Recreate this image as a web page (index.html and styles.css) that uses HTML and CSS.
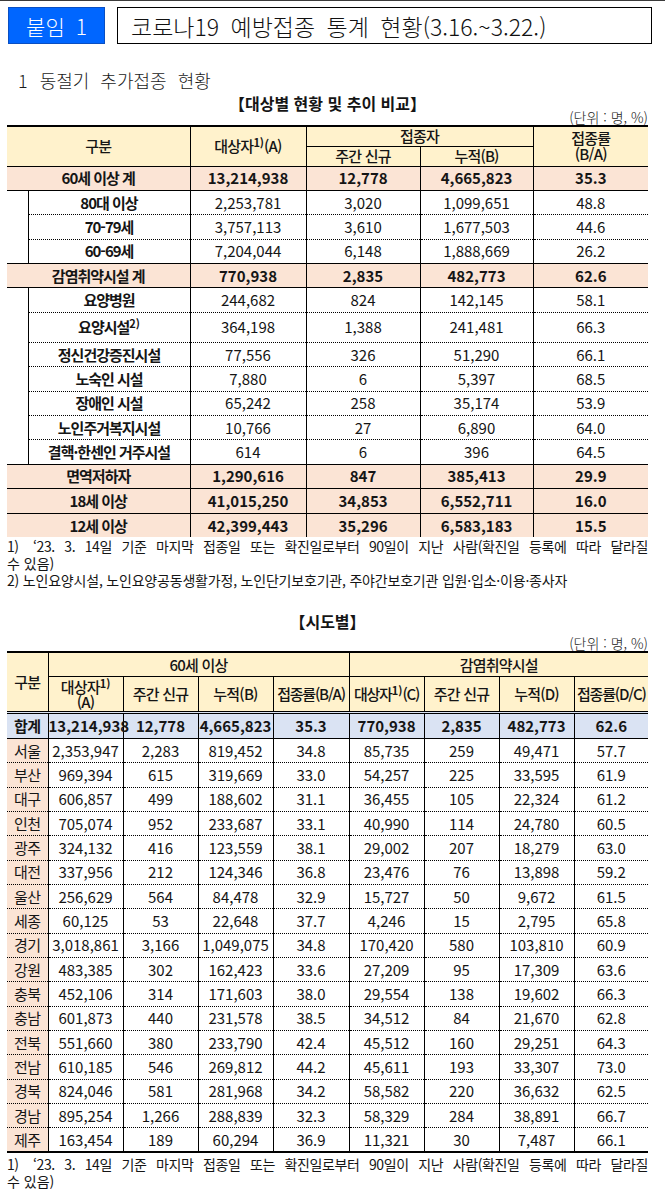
FILE: index.html
```html
<!DOCTYPE html>
<html lang="ko">
<head>
<meta charset="utf-8">
<title>코로나19 예방접종 통계 현황</title>
<link rel="stylesheet" href="styles.css">
</head>
<body>
<div class="page">
  <div class="topbar">
    <div class="tag">붙임 1</div>
    <div class="title">코로나19 예방접종 통계 현황(3.16.~3.22.)</div>
  </div>

  <div class="section"><span class="sec-num">1</span>동절기 추가접종 현황</div>

  <div class="caption">【대상별 현황 및 추이 비교】</div>
  <div class="unit">(단위 : 명, %)</div>

  <table class="t1">
    <colgroup>
      <col class="c-blank"><col class="c-label"><col class="c-num"><col class="c-num2"><col class="c-num3"><col class="c-rate">
    </colgroup>
    <thead>
      <tr class="h1">
        <th colspan="2" rowspan="2">구분</th>
        <th rowspan="2">대상자<sup>1)</sup>(A)</th>
        <th colspan="2">접종자</th>
        <th rowspan="2" class="two">접종률<br>(B/A)</th>
      </tr>
      <tr class="h2">
        <th>주간 신규</th>
        <th>누적(B)</th>
      </tr>
    </thead>
    <tbody>
      <tr class="tot"><td colspan="2" class="lbl">60세 이상 계</td><td>13,214,938</td><td>12,778</td><td>4,665,823</td><td>35.3</td></tr>
      <tr class="sub"><td rowspan="3" class="blank"></td><td class="lbl">80대 이상</td><td>2,253,781</td><td>3,020</td><td>1,099,651</td><td>48.8</td></tr>
      <tr class="sub"><td class="lbl">70-79세</td><td>3,757,113</td><td>3,610</td><td>1,677,503</td><td>44.6</td></tr>
      <tr class="sub"><td class="lbl">60-69세</td><td>7,204,044</td><td>6,148</td><td>1,888,669</td><td>26.2</td></tr>
      <tr class="tot"><td colspan="2" class="lbl">감염취약시설 계</td><td>770,938</td><td>2,835</td><td>482,773</td><td>62.6</td></tr>
      <tr class="sub"><td rowspan="7" class="blank"></td><td class="lbl">요양병원</td><td>244,682</td><td>824</td><td>142,145</td><td>58.1</td></tr>
      <tr class="sub tall"><td class="lbl">요양시설<sup>2)</sup></td><td>364,198</td><td>1,388</td><td>241,481</td><td>66.3</td></tr>
      <tr class="sub"><td class="lbl">정신건강증진시설</td><td>77,556</td><td>326</td><td>51,290</td><td>66.1</td></tr>
      <tr class="sub"><td class="lbl">노숙인 시설</td><td>7,880</td><td>6</td><td>5,397</td><td>68.5</td></tr>
      <tr class="sub"><td class="lbl">장애인 시설</td><td>65,242</td><td>258</td><td>35,174</td><td>53.9</td></tr>
      <tr class="sub"><td class="lbl">노인주거복지시설</td><td>10,766</td><td>27</td><td>6,890</td><td>64.0</td></tr>
      <tr class="sub"><td class="lbl">결핵·한센인 거주시설</td><td>614</td><td>6</td><td>396</td><td>64.5</td></tr>
      <tr class="tot"><td colspan="2" class="lbl">면역저하자</td><td>1,290,616</td><td>847</td><td>385,413</td><td>29.9</td></tr>
      <tr class="tot"><td colspan="2" class="lbl">18세 이상</td><td>41,015,250</td><td>34,853</td><td>6,552,711</td><td>16.0</td></tr>
      <tr class="tot"><td colspan="2" class="lbl">12세 이상</td><td>42,399,443</td><td>35,296</td><td>6,583,183</td><td>15.5</td></tr>
    </tbody>
  </table>

  <div class="notes n1">
    <div class="just"><span class="fn-num">1)</span>‘23. 3. 14일 기준 마지막 접종일 또는 확진일로부터 90일이 지난 사람(확진일 등록에 따라 달라질</div>
    <div>수 있음)</div>
    <div class="narrow">2) 노인요양시설, 노인요양공동생활가정, 노인단기보호기관, 주야간보호기관 입원·입소·이용·종사자</div>
  </div>

  <div class="caption c2">【시도별】</div>
  <div class="unit">(단위 : 명, %)</div>

  <table class="t2">
    <colgroup>
      <col class="d-reg"><col class="d-a"><col class="d-b"><col class="d-c"><col class="d-d"><col class="d-e"><col class="d-f"><col class="d-g"><col class="d-h">
    </colgroup>
    <thead>
      <tr class="g1">
        <th rowspan="2" class="reg-h">구분</th>
        <th colspan="4">60세 이상</th>
        <th colspan="4">감염취약시설</th>
      </tr>
      <tr class="g2">
        <th class="two tight">대상자<sup>1)</sup><br>(A)</th>
        <th>주간 신규</th>
        <th>누적(B)</th>
        <th class="sq">접종률(B/A)</th>
        <th class="sq">대상자<sup>1)</sup>(C)</th>
        <th>주간 신규</th>
        <th>누적(D)</th>
        <th class="sq">접종률(D/C)</th>
      </tr>
    </thead>
    <tbody>
      <tr class="sum"><td class="reg">합계</td><td>13,214,938</td><td>12,778</td><td>4,665,823</td><td>35.3</td><td>770,938</td><td>2,835</td><td>482,773</td><td>62.6</td></tr>
      <tr><td class="reg">서울</td><td>2,353,947</td><td>2,283</td><td>819,452</td><td>34.8</td><td>85,735</td><td>259</td><td>49,471</td><td>57.7</td></tr>
      <tr><td class="reg">부산</td><td>969,394</td><td>615</td><td>319,669</td><td>33.0</td><td>54,257</td><td>225</td><td>33,595</td><td>61.9</td></tr>
      <tr><td class="reg">대구</td><td>606,857</td><td>499</td><td>188,602</td><td>31.1</td><td>36,455</td><td>105</td><td>22,324</td><td>61.2</td></tr>
      <tr><td class="reg">인천</td><td>705,074</td><td>952</td><td>233,687</td><td>33.1</td><td>40,990</td><td>114</td><td>24,780</td><td>60.5</td></tr>
      <tr><td class="reg">광주</td><td>324,132</td><td>416</td><td>123,559</td><td>38.1</td><td>29,002</td><td>207</td><td>18,279</td><td>63.0</td></tr>
      <tr><td class="reg">대전</td><td>337,956</td><td>212</td><td>124,346</td><td>36.8</td><td>23,476</td><td>76</td><td>13,898</td><td>59.2</td></tr>
      <tr><td class="reg">울산</td><td>256,629</td><td>564</td><td>84,478</td><td>32.9</td><td>15,727</td><td>50</td><td>9,672</td><td>61.5</td></tr>
      <tr><td class="reg">세종</td><td>60,125</td><td>53</td><td>22,648</td><td>37.7</td><td>4,246</td><td>15</td><td>2,795</td><td>65.8</td></tr>
      <tr><td class="reg">경기</td><td>3,018,861</td><td>3,166</td><td>1,049,075</td><td>34.8</td><td>170,420</td><td>580</td><td>103,810</td><td>60.9</td></tr>
      <tr><td class="reg">강원</td><td>483,385</td><td>302</td><td>162,423</td><td>33.6</td><td>27,209</td><td>95</td><td>17,309</td><td>63.6</td></tr>
      <tr><td class="reg">충북</td><td>452,106</td><td>314</td><td>171,603</td><td>38.0</td><td>29,554</td><td>138</td><td>19,602</td><td>66.3</td></tr>
      <tr><td class="reg">충남</td><td>601,873</td><td>440</td><td>231,578</td><td>38.5</td><td>34,512</td><td>84</td><td>21,670</td><td>62.8</td></tr>
      <tr><td class="reg">전북</td><td>551,660</td><td>380</td><td>233,790</td><td>42.4</td><td>45,512</td><td>160</td><td>29,251</td><td>64.3</td></tr>
      <tr><td class="reg">전남</td><td>610,185</td><td>546</td><td>269,812</td><td>44.2</td><td>45,611</td><td>193</td><td>33,307</td><td>73.0</td></tr>
      <tr><td class="reg">경북</td><td>824,046</td><td>581</td><td>281,968</td><td>34.2</td><td>58,582</td><td>220</td><td>36,632</td><td>62.5</td></tr>
      <tr><td class="reg">경남</td><td>895,254</td><td>1,266</td><td>288,839</td><td>32.3</td><td>58,329</td><td>284</td><td>38,891</td><td>66.7</td></tr>
      <tr><td class="reg">제주</td><td>163,454</td><td>189</td><td>60,294</td><td>36.9</td><td>11,321</td><td>30</td><td>7,487</td><td>66.1</td></tr>
    </tbody>
  </table>

  <div class="notes n2">
    <div class="just"><span class="fn-num">1)</span>‘23. 3. 14일 기준 마지막 접종일 또는 확진일로부터 90일이 지난 사람(확진일 등록에 따라 달라질</div>
    <div>수 있음)</div>
  </div>
</div>
</body>
</html>
```

FILE: styles.css
```css
html, body {
  margin: 0;
  padding: 0;
  background: #fff;
}

body {
  font-family: "Noto Sans CJK KR", "Noto Sans", sans-serif;
  color: #151515;
}

.page {
  width: 665px;
  border-top: 1px solid #3a3a3a;
}

/* ---------- top bar ---------- */
.topbar {
  display: flex;
  gap: 12px;
  margin-top: 6px;
  padding-left: 8px;
  height: 37px;
}

.tag {
  width: 97px;
  box-sizing: border-box;
  background: #0066ff;
  border: 1px solid #0a4fc2;
  color: #fff;
  font-size: 21px;
  font-weight: 300;
  word-spacing: 5px;
  display: flex;
  align-items: center;
  justify-content: center;
}

.title {
  width: 535px;
  box-sizing: border-box;
  border: 1px solid #000;
  padding-left: 13px;
  font-size: 23px;
  font-weight: 300;
  word-spacing: 5px;
  display: flex;
  align-items: center;
  color: #111;
}

/* ---------- headings ---------- */
.section {
  margin: 24px 0 0 18px;
  font-size: 18px;
  line-height: 24px;
  font-weight: 300;
  word-spacing: 6px;
  color: #1a1a1a;
}

.sec-num {
  margin-right: 12px;
}

.caption {
  margin: 1px 0 0 7px;
  width: 641px;
  text-align: center;
  font-size: 16px;
  line-height: 20px;
  font-weight: 700;
}

.caption.c2 {
  margin-top: 22px;
}

.unit {
  margin: -4px 0 0 7px;
  width: 641px;
  text-align: right;
  font-size: 14px;
  line-height: 16px;
  font-weight: 300;
  color: #222;
}

.c2 + .unit {
  margin-top: 4px;
}

/* ---------- tables (shared) ---------- */
table {
  margin-left: 7px;
  width: 641px;
  table-layout: fixed;
  border-collapse: collapse;
  border-left: hidden;
  border-right: hidden;
  border-top: 2px solid #000;
}

th, td {
  padding: 0;
  text-align: center;
  vertical-align: middle;
  font-size: 15px;
  line-height: 18px;
  border: 1px solid #000;
  white-space: nowrap;
  overflow: visible;
}

th {
  background: #fff2cc;
  font-weight: 500;
  letter-spacing: -0.8px;
}

sup {
  font-size: 11px;
  font-weight: 700;
  line-height: 0;
  vertical-align: 5px;
  letter-spacing: 0;
}

.two {
  line-height: 16px;
}

.two.tight {
  line-height: 15px;
}

/* ---------- table 1 ---------- */
.t1 {
  border-bottom: hidden;
}

.t1 .c-blank { width: 21px; }
.t1 .c-label { width: 162px; }
.t1 .c-num { width: 116px; }
.t1 .c-num2 { width: 114px; }
.t1 .c-num3 { width: 113px; }
.t1 .c-rate { width: 115px; }

.t1 .h1 { height: 20px; }
.t1 .h2 { height: 20px; }

.t1 tbody tr { height: 24.4px; }
.t1 tbody tr.tall { height: 30px; }

.t1 .tot td {
  background: #fbe4d5;
  font-weight: 700;
}

.t1 .sub td {
  border-top-style: dotted;
  border-bottom-style: dotted;
}

.t1 .sub td.blank {
  border-top-style: solid;
  border-bottom-style: solid;
  background: #fff;
}

.lbl {
  font-weight: 700;
  letter-spacing: -1px;
}

/* ---------- table 2 ---------- */
.t2 {
  border-bottom: 2px solid #000;
}

.t2 .d-reg { width: 41px; }
.t2 .d-a { width: 75px; }
.t2 .d-b { width: 75px; }
.t2 .d-c { width: 75px; }
.t2 .d-d { width: 76px; }
.t2 .d-e { width: 75px; }
.t2 .d-f { width: 75px; }
.t2 .d-g { width: 75px; }
.t2 .d-h { width: 74px; }

.t2 .g1 { height: 24px; }
.t2 .g2 { height: 36px; }
.t2 .g2 th {
  border-bottom: 3px double #000;
}
.t2 .g1 th.reg-h {
  border-bottom: 3px double #000;
}

.t2 th.sq {
  letter-spacing: -1.2px;
}

.t2 tbody tr {
  height: 24.35px;
}

.t2 tbody td {
  border-top-style: dotted;
  border-bottom-style: dotted;
}

.t2 .sum {
  height: 26px;
}

.t2 .sum td {
  background: #dae3f3;
  font-weight: 700;
  border-bottom-style: solid;
}

.t2 td.reg {
  background: #fbe4d5;
  letter-spacing: -0.5px;
}

.t2 .sum td.reg {
  background: #dae3f3;
}

/* ---------- notes ---------- */
.notes {
  margin-left: 7px;
  width: 641px;
  font-size: 14px;
  line-height: 17px;
  color: #151515;
}

.notes.n1 {
  margin-top: 1px;
}

.notes.n2 {
  margin-top: 3px;
}

.just {
  text-align: justify;
  text-align-last: justify;
  letter-spacing: -0.4px;
}

.fn-num {
  display: inline-block;
  width: 26px;
}

.narrow {
  letter-spacing: -0.2px;
}
```
